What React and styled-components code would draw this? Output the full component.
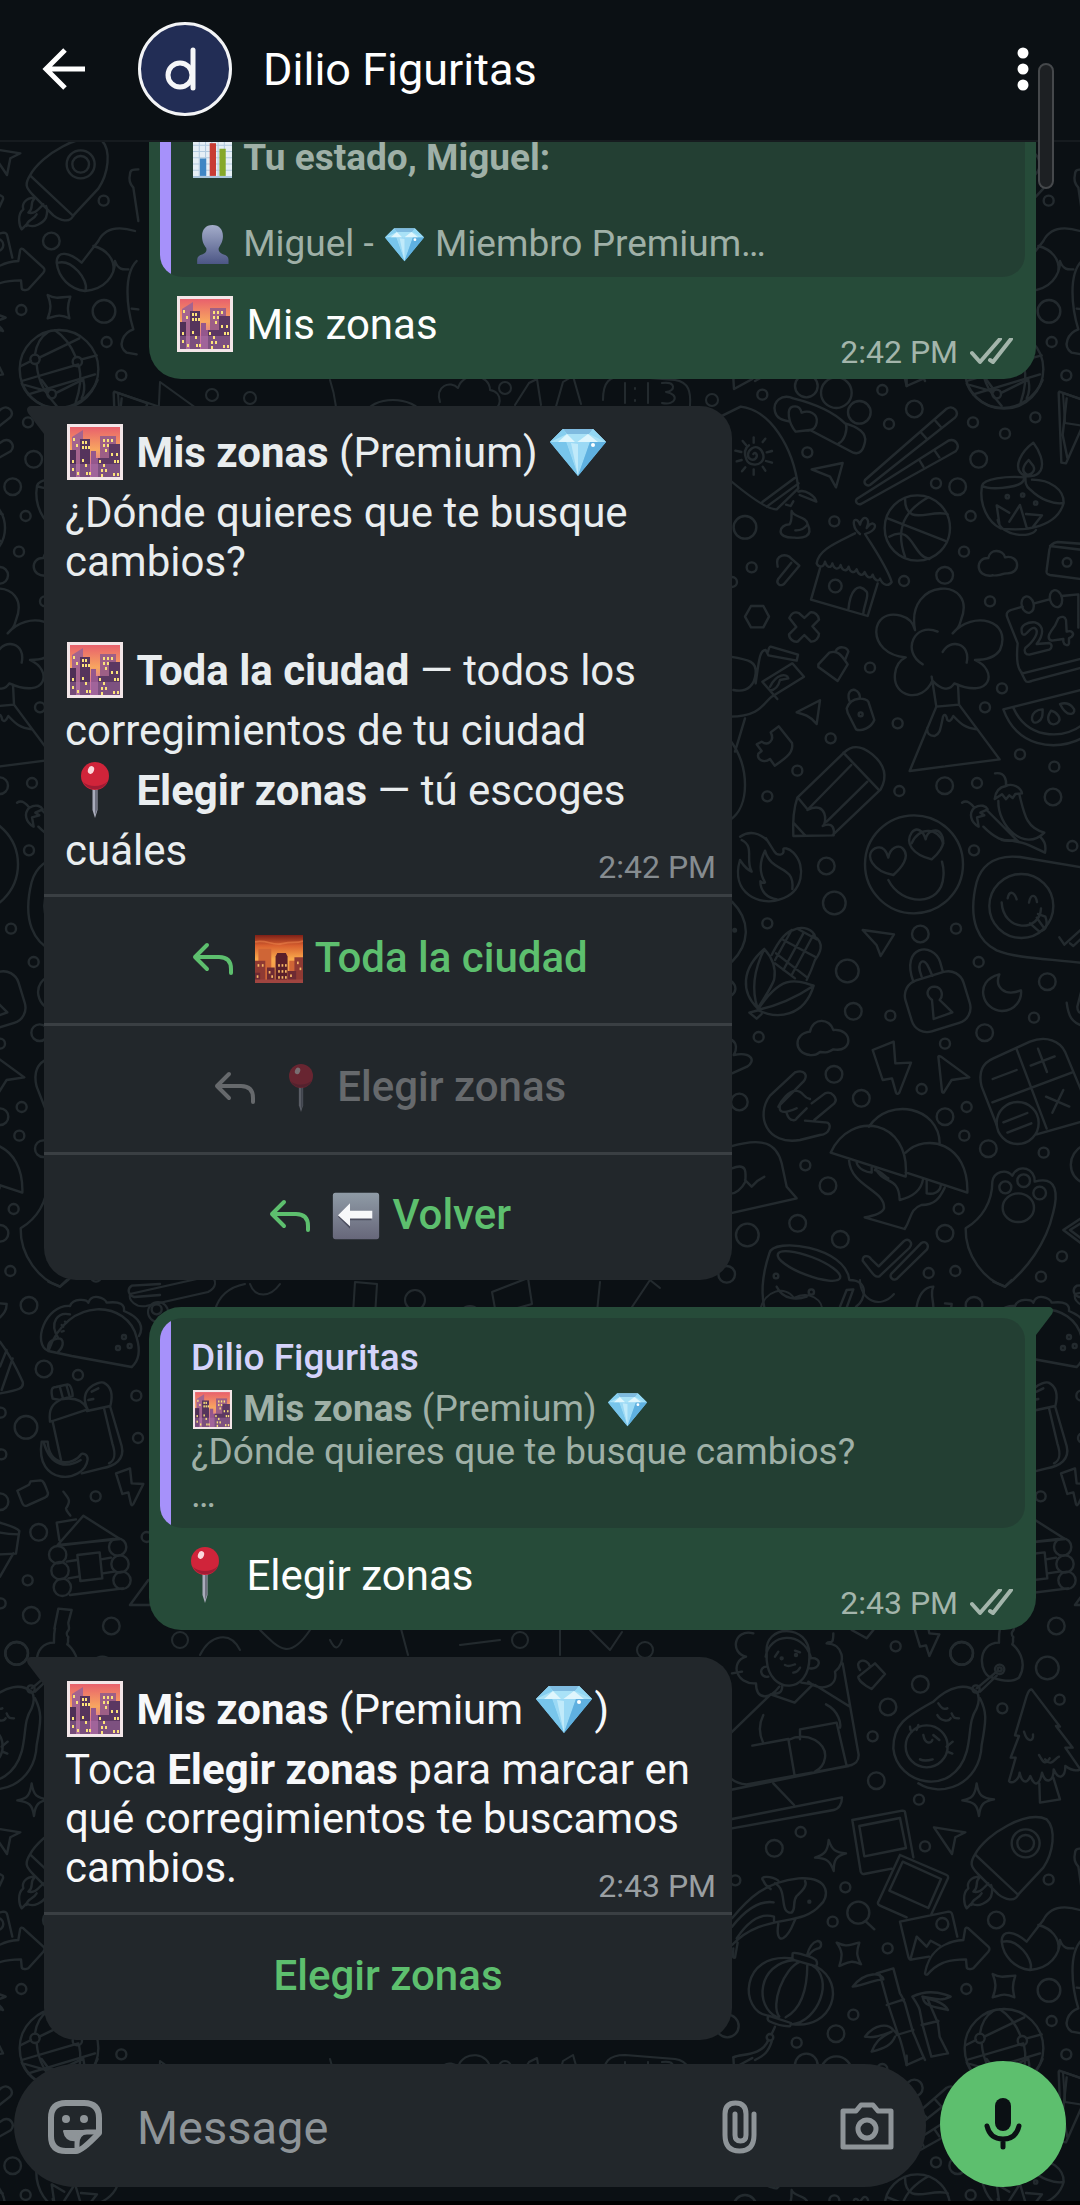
import React from "react";
import styled, { createGlobalStyle } from "styled-components";

const color = {
  page: "#0b1014",
  line: "#232a2e",
  incoming: "#22272b",
  outgoing: "#264b39",
  quote: "#233f33",
  accent: "#a691fa",
  green: "#5dbf6e",
  divider: "#3a3f43",
  icon: "#8e9498",
};

const GlobalStyle = createGlobalStyle`
  * { box-sizing: border-box; }
  body { margin: 0; background: ${color.page}; }
  button, input { font: inherit; color: inherit; border: 0; padding: 0; background: none; }
  button { cursor: pointer; }
  svg { display: block; flex: none; }
`;

const Page = styled.div`
  position: relative;
  display: flex;
  flex-direction: column;
  height: 100vh;
  overflow: hidden;
  background: ${color.page};
  font-family: Roboto, "Liberation Sans", sans-serif;
  font-size: 42px;
  line-height: 49px;
`;

/* ---------- wallpaper ---------- */

const WallpaperSvg = styled.svg`
  position: absolute;
  inset: 0;
  width: 100%;
  height: 100%;
`;

const dots = (list, r) => list.map(([x, y]) => <circle key={`${x}-${y}`} cx={x} cy={y} r={r} />);

const Section = ({ x, y, children }) => (
  <g transform={`translate(${x} ${y}) scale(0.33333)`}>{children}</g>
);

const DoodlesTop = () => (
  <Section x={720} y={380}>
    {dots([[127,44],[487,30],[507,132],[262,217],[759,127],[946,112],[855,161],[648,310],[752,408],[343,424],[732,515],[95,562],[552,603],[810,664],[450,863],[846,925],[795,982],[533,1030],[332,1075],[900,1123],[232,1172],[1003,1160],[142,1249],[538,1233],[771,1209],[36,606]], 15)}
    {dots([[583,87],[776,238],[713,320],[674,586],[674,1217],[999,1251]], 25)}
    {dots([[75,442],[259,18],[418,97]], 34)}
    <circle cx="349" cy="38" r="46" />
    {/* hot-air balloon */}
    <path d="M-40 130 62 80C150 90 220 200 235 325L170 388C140 390 60 330 -40 240M127 366l97-72M140 380l96-70M235 335c20-8 50 12 54 30l-50-20M198 374l14 4 8-14" />
    <path d="M100 222c5-8 15 2 8 12s-25 5-24-10 18-28 32-20 20 30 8 42-38 10-45-8-4-34 8-42M101 172v16M101 268v16M46 212l18 4M138 243l18 5M68 183l10 12M128 186l8-10M50 244l15-4M140 217l16-4M66 274l10-12M128 260l8 12" />
    {/* hand cream */}
    <path d="M165 95c-8-30 20-55 55-40 60 15 120 40 155 75 40 10 65 30 60 55s-15 40-35 33L270 150l-43 5C205 130 198 85 218 80s25 10 27 18c20-8 50 0 45 30-3 20-15 20-25 24M378 132c5 20-5 50-22 58M165 95c5 20 20 25 45 30" />
    {/* chopsticks */}
    <path d="M435 300 680 86c20-12 40 10 25 27L450 315c-10 5-20-5-15-15ZM410 357 685 182c20-8 38 14 22 32L423 372c-12 3-18-7-13-15ZM604 158l16 18M646 122l16 18M598 240l12 20M644 212l14 20" />
    <path d="m275 268 93-19-20 73-18-32ZM215 393c5 20 45 15 48 40-15 20-30 18-37 18M263 433c20 40-20 42-40 40-60 2-45-40-15-40 10-10 5-30 7-40" />
    {/* beach hut */}
    <path d="M405 460c-60 30-110 50-115 90 5 12 20 15 25-5 5 18 18 22 22 5 5 20 20 20 25 5 5 20 20 20 24 5 5 20 18 20 24 8 5 18 18 22 24 8 8 20 20 20 24 8 5 18 18 22 22 12 8 20 25 25 35 10C500 560 465 510 435 462c35-10 35-30 22-32-10 2-12 8-17 14 15-30-12-45-20-10-8-20-22-18-18 0 2 14 10 22 18 28M300 565l-27 94 170 49 30-98M385 690c5-60 30-85 55-55 8 12-8 40-10 65" /><circle cx="346" cy="618" r="19" />
    {/* basketball */}
    <circle cx="592" cy="444" r="98" />
    <path d="M503 415 677 483M625 352C540 400 530 460 555 530M555 355c0 90 80 30 128 48M508 470c70-40 70 60 120 67" />
    {/* oil lamp */}
    <path d="M940 188c-40 30-55 70-40 88 15 20 50 15 62-5 12-25-5-60-22-83ZM926 240c-20 20-20 35-8 42s30-8 22-24ZM916 292c-60-5-125 5-130 25 25 15 100 5 118-8 12-8 8-18 12-30 0 30 0 40 15 50 30 30 70 45 100 40 2-40-40-70-95-70M786 317c-10 60 20 110 55 128 80 10 170-5 190-76M833 420c10 50 100 55 115 30M838 430l-8-54 38 22M868 425l32-50 20 68M918 402l48 4-28 36" />
    <circle cx="862" cy="350" r="5" /><circle cx="908" cy="345" r="5" /><circle cx="947" cy="369" r="5" />
    <path d="M740 10c40 100 180 100 228-10M750 15l70 20M845 38l80-40M800 0l22 30M925 0c5 20 5 35-5 55" /><circle cx="830" cy="42" r="13" />
    <path d="m1018 35 100 35-80 180-14-2-8-210M1040 55l-12 110 14 68M560-10v28l50-22M40-5l2 32 55-30" />
    <path d="M815 587c-50 5-50-55-10-53 5-30 45-25 50-2 45-10 50 50 5 48-15 0-10 5-30 6s-8-3-15 1Z" />
    <path d="M1090 598 990 585c-10-2-12-5-10-15l8-60c2-15 10-22 25-24l80 6M990 498l100 12" /><circle cx="1041" cy="547" r="13" />
    <path d="M173 560c-10-40 30-40 40-25l25 22-46 55c-10 8-25 0-18-14l40-50M75 710l18-32h37l17 32-17 32H93ZM208 714c5-12 15-20 28-15l17 15 18-17c12-2 25 8 26 22l-20 20 20 22c0 12-10 25-24 24l-20-20-20 20c-12 2-26-8-26-22l22-22Z" />
    {/* volcano with its cloud */}
    <path d="M585 750c-30-160 190-160 138-30-5 20-10 25-25 40 60-70 180-40 142 50-20 30-60 30-75 30 70 30 50 120-62 70-10 15-30 30-66-8-30 70-120 50-112-20 2-20 12-40 32-50-120-10-110-150-15-125 30 8 40 30 43 43M653 755c-70-30-110 60-45 98M668 816c20-40 85-30 72 32M635 890l14 90 68-6-3-60M649 980l-80 193 270-35L717 974M669 1010c-10 50-10 50-25 58-15 0-25-8-22-25M669 1010c5-10 10-5 13 10 5 5 10 5 18-12 20 20 30 35 70 40" />
    {/* calendar */}
    <path d="M908 680l-35 10c-15 5-15 15-10 25l30 75M943 670l45-12M1025 648l50-5v100M893 790c-5 50 0 80 15 90l180-45M900 870l15 30c5 10 10 5 20 3l150-40" />
    <ellipse cx="923" cy="674" rx="18" ry="25" transform="rotate(-15 923 674)" /><ellipse cx="1008" cy="656" rx="18" ry="26" transform="rotate(-15 1008 656)" />
    <path d="M905 755c-5-20 20-30 40-28 30 10 25 40 5 65l38-3c10 5 8 15 0 20l-60 15c-12 0-18-10-12-20 25-20 45-50 28-60-12-3-20 15-30 20-8 0-8-3-9-9ZM1015 715c10-8 20-5 23 5l2 35c15-5 25 5 15 15l-8 5v15c-2 10-15 5-17-5v-8l-35 5c-15-5-8-20-2-28 12-15 18-28 22-39Z" />
    {/* watermelon */}
    <path d="m1090 928-240 60c40 110 150 130 240 85M880 983c40 90 140 100 210 50" />
    <path d="M968 988c-40 0-40 50-15 38 15-8 15-20 15-38ZM993 992c-20 30 0 48 18 38 20-15-5-35-18-38ZM1020 972c25 50 55 25 38 10-10-12-25-14-38-10Z" />
    {/* paint tube and padlocks */}
    <path d="M30 830c60 10 80 15 77 50-3 30-20 60-67 50M107 910c10-70 12-100 30-100l8 16 85 16 4-18-82-24c-5 0-5 5-8 15M30 1010c90 0 100-40 125-60l97-60-35-40-90 55 45 52M150 920c20-40 50-40 55-25l-25 5c-5 20-15 30-30 32M75 1015l-30 100M30 1080c60 80 60 200 0 240" />
    <path d="m295 853 33-35c25-8 35 5 55 35l-30 50-58-42ZM346 815c10-20 35-15 39 0l-10 25M380 985c15-40 60-30 65-20l18 55c-10 25-40 35-55 28l-25-50ZM388 962c-8-25 5-35 17-32 12 5 15 15 15 25M230 997l70-36-10 71c-20-25-40-30-60-35Z" /><circle cx="422" cy="1003" r="6" />
    <path d="m110 1093 15-8c20 15 40-5 27-28l24-18 40 50c5 25-10 40-52 68l-14-20c-20 15-40 0-35-16l10-8Z" />
    {/* pencil */}
    <path d="m232 1253 140-135c30-30 60-15 85 5 30 25 50 60 25 105l-145 138-117 2c-2-40 0-80 12-115ZM370 1118l105 110M394 1155 262 1290c60-30 60 40 46 48 35-15 35 15 33 28M442 1205 320 1325M220 1328l35 38M235 1255l25 30" />
    {/* chillies */}
    <path d="M825 1180c30-5 35 20 33 38M858 1218c20-10 45 5 48 22l-20 2-8 12-10-8-10 12-12-15-22 14c2-20 10-35 34-39ZM898 1243c15 60 20 100 75 115-60 60-140-20-138-95M726 1268c15-10 30 5 37 15M763 1283c20-12 35-5 40 5l-22 10 12 8-22 6 5 28c-25-15-30-40-13-57ZM790 1340c30 30 60 50 100 40M800 1290l95 95" />
    {/* top of the tongue-out sticker and of the fire */}
    <path d="M575 1390c20-50 80-50 95 0M60 1370c30-20 60-10 80 10" />
  </Section>
);

const DoodlesMiddle = () => (
  <Section x={720} y={840}>
    {dots([[762,31],[1057,18],[142,250],[708,266],[776,366],[511,527],[942,533],[116,591],[675,611],[605,747],[740,801],[733,887],[971,938],[256,976],[716,1107],[1026,1249],[626,1299],[706,1293],[963,1310]], 15)}
    {dots([[319,78],[601,282],[400,514],[982,425],[342,703],[794,578],[424,775],[675,830],[805,926],[58,786],[324,1037],[233,1150],[361,1198],[675,1180],[20,1303]], 25)}
    {dots([[343,189],[382,393],[82,1185]], 34)}
    {/* fire */}
    <path d="M65 0c40 20 10 60 30 95-20-10-25-20-35-35-30 100 60 140 120 118 70-20 80-100 40-140-15-15-30-15-30-10 5 20-20 20-28 5L138-5M135 32c-20 40-15 70 0 95-5 5-8 0-14-3 0 30 20 50 50 54M135 32c20 70 90 40 82 115" />
    {/* face with hearts */}
    <circle cx="582" cy="73" r="147" />
    <path d="M505 120c40 80 160 80 165-10 2-15 0-30-4-45M520 105c-60-10-90-60-55-80 25-10 35 10 40 28 5-30 30-40 43-28 25 25-5 60-28 80ZM635 58c-60-15-80-50-60-80 15-20 35-5 42 20 5-28 35-35 47-15 15 25 0 50-29 75Z" />
    {/* tongue-out sticker */}
    <path d="m1090 83-190-32c-90-10-120 40-130 75-30 120 10 180 60 205 60 25 160 25 260 38" /><circle cx="904" cy="198" r="96" />
    <path d="M845 187c5 90 115 90 118 18M863 175c5-25 20-20 27 3M927 188c5-28 20-25 24-2M930 250l28 25c25-5 25-25 18-45l-22-8M950 233l20 28M1018 292l15 22 50-45M1050 310l10 8 30-28" />
    <path d="m428 270 94 13-40 65-12-32ZM845 0c60 0 90 20 130 38C980 10 970 0 960-10M36 185c60 60 50 130 0 180M36 425c15 15 12 30 0 40" /><circle cx="44" cy="271" r="4" />
    {/* corn */}
    <path d="M133 327c-70 60-70 130-20 178 20-30 50-80 50-90 5-30-5-60-30-88ZM133 327c-30 60-40 120-20 178M113 510c60 30 140 20 168-73-60-20-100-30-168 73ZM281 437c-60 40-110 60-168 73M118 510l-30 8 22 18 15-14M155 345c20-40 40-70 65-75 30-15 60 0 65 20 30 20 15 50 0 70-10 30-20 50-25 60M190 300l95 50M168 340l90 70M165 370l60 45M235 268l55 30M190 390l60-110M215 405l65-120M165 360l50-90" />
    {/* padlock */}
    <path d="M580 425c-40-110 60-120 80-60l8 28M605 410c-20-50 10-60 22-25l10 22" /><rect x="562" y="405" width="182" height="160" rx="48" transform="rotate(-17 653 485)" />
    <path d="M636 480c-25-20-10-40 8-40 25 2 25 30 15 40l38 37-56 20Z" />
    <path d="M838 403c-80 20-50 110 8 110 40 0 60-35 57-62-50 20-80-10-65-48ZM458 630l63-25 5 65 47-2-35 90c-5 5-8 5-10 0l-12-43-28 5ZM655 650c0-3 5-2 8 0l85 62-53 8-24 38c-3 0-5-2-5-5Z" />
    <path d="M270 645c-50-5-50-65 0-70 10-45 60-40 70-5 60-5 60 70 0 58-15 10-20 10-40 8-10 8-15 10-30 9Z" />
    {/* calculator */}
    <path d="M830 855l-45-115c-10-40 0-70 35-85l110-50c50-20 90 0 105 30l50 120v90l-135 38M890 628l90 238M817 787l240-90M818 717l72-27M932 677l72-28M954 626l27 70M978 770l70 30M1030 750l-33 68M850 847l72-28M862 878l72-28" /><circle cx="893" cy="849" r="63" />
    <path d="M1040 488c5 40 15 60 50 70M1090 430l-18 70c0 15 5 20 18 20" />
    {/* rock hand */}
    <path d="M225 697c30-10 40 10 25 28l-70 70c-10 40 50 10 50 10M225 697l-75 70c-45 60-10 150 90 133l60-15c30 0 40-40 15-38l-60-5M275 790l40-30c20-8 40 15 28 30l-60 50M175 800c10-20 30-45 50-48 30 2 20 20 45 25M200 820c10 30 30 20 30 15l30-30M36 600c15 10 15 30 5 45 50-10 70 15 40 35l-45 20" />
    {/* cap */}
    <path d="M30 920c100-30 140-10 155 50l15 70 30 35-200 45M36 985c50-20 40 20 40 40-10 20-30 40-50 35M75 1020l20 20 18-18 20-12" />
    {/* mushrooms */}
    <path d="M332 938c60-130 240-100 225 72ZM447 860c60-90 210-60 212 50M557 938c60-60 190-30 185 120L557 997M387 960c5 80 110 90 105 145-5 15-30 22-58 27l120 35c20-30 15-60 50-72 40 0 55-20 70-52M467 985c20 50 70 20 72 95 40-10 65-30 70-62M410 968c5 20 30 28 45 30v-16M620 1020v40c20 5 40-5 42-22M465 990c20 5 30 20 40 25" />
    {/* paw sleeve */}
    <path d="M737 1165c50-30 80-80 80-140 5-30 40-40 60-18 20-40 70-20 67 18 70-20 70 40 55 95-20 90-80 170-144 220-60-20-120-90-118-175Z" /><circle cx="856" cy="1042" r="18" /><circle cx="911" cy="1022" r="19" /><circle cx="959" cy="1059" r="19" /><ellipse cx="895" cy="1103" rx="47" ry="43" />
    <path d="M1090 915c-50 30-50 90 0 115M1090 1215l-60-45 60-40M1090 1200l-40-30 40-25M428 1262c0-20 20-15 25-5l23 22 75-75c15-12 30 5 17 20l-90 85c-15 5-20-10-50-47ZM515 1300l88-90c15-10 25 5 18 18l-90 88c-12 8-25-5-16-16Z" />
    {/* cup */}
    <path d="M148 1240c10-50 230-20 240 80 60 0 50 60 20 80M148 1240c-20 60-30 120-10 180M170 1340c20 40 60 40 90 30M360 1400l20-50 20-2-22 60M590 1400c5-30 20-60 50-60-10 20 0 40 0 60" /><ellipse cx="267" cy="1278" rx="100" ry="28" transform="rotate(21 267 1278)" /><circle cx="168" cy="1308" r="7" /><circle cx="274" cy="1356" r="8" />
  </Section>
);

const DoodlesLower = () => (
  <Section x={720} y={1620}>
    {dots([[527,79],[458,349],[847,265],[1019,239],[597,539],[242,636],[615,679],[376,802],[338,905],[503,985],[739,1107],[400,1184],[230,1268],[995,1203],[986,779],[1039,1303],[46,781]], 15)}
    {dots([[601,193],[504,261],[469,482],[163,685],[829,900],[348,1241]], 25)}
    {dots([[725,100],[982,144],[987,1111],[22,1218]], 34)}
    {/* woman with a box */}
    <path d="M100 40c-60-15-70 60-22 70-50 15-30 85 30 80 0 50 40 50 70 10M340 40c0 40-10 20-20 30 50 0 60 60 25 85 10 50-50 60-80 30M140 100c-10-90 130-90 128 5 5 120-120 120-128 15ZM137 110c10-70 110-80 135 0M270 115c40-5 30 35 0 30M140 140c-25 0-20 35 5 30M195 135c10 5 15 3 30-2M220 158c10-2 15-5 20-15M165 110l10-15M225 92l15 5M187 195c0 25-10 25-35 28l72 25 55-55-35-5M152 223-10 380M285 195l105 65M130 285c-15 30-12 60 0 85M318 253c40 20 45 60 42 70M97 377l108-20 18 105M240 358v-30l110-20 30 130M205 360c30-15 60-10 80 0 50 30 30 80 0 95M368 130l48 275c0 20-10 28-30 33L80 493C30 490 20 460 0 430M30 510l365-75M160 490l62 65M36 597l330-65c0 20-10 35-25 38L36 625M36 160l30-5" />
    <circle cx="185" cy="115" r="3" /><circle cx="228" cy="105" r="3" />
    <path d="m395 30 45 25 20-25M585 30l15 50 18-4 10 32 30-65-30-3-2-10M415 170l50-40 30 32-40 45c-30-15-40-30-40-37ZM420 150c-20-30 20-40 30-10" />
    {/* knitted mitten with key ring */}
    <path d="M840 25c-4 20-3 35-3 43-70 0-60 100-20 105 30 10 60 15 80 0 30-50-10-95-20-100 5-10 0-10 3-22-5-5-8-10 0-20 5-5 0-15 0-22M838 26l12-60 40 4-10 38M770 205l60-50M780 215l50-48" /><circle cx="839" cy="148" r="14" /><circle cx="839" cy="148" r="6" /><circle cx="768" cy="207" r="11" />
    {/* avocado */}
    <path d="M770 215c-30-25-80-20-130 30C560 290 520 310 520 385c10 110 180 150 220 10 15-60 5-90 30-130 8-20 10-35 0-50ZM780 235c20 40 20 60 5 140-5 120-120 160-190 115" /><circle cx="620" cy="379" r="63" />
    <path d="M655 250c10 15 15 20 27 15M652 285c10 20 35 20 40 10M695 280c5 15 10 15 22 15M610 345c5 30 25 25 27 15M640 345l18 15M600 418c10 5 20 5 38 0M575 335c-5-5-5-15-5-15M590 330l5-15M680 380l18-15M682 395l15 6" />
    {/* pine tree */}
    <path d="M935 208c-10 0-10 10-15 20l-35 118 12 2-25 65h15l-20 70c5 10 30 0 32-25 5 25 20 40 32 10 15 40 30 20 35-10 10 35 35 30 35-10 15 35 35 25 35-10 20 15 35 15 45 10l-45-65h22l-50-65 12 2ZM958 490l2 58 60-10-20-65M912 335c10 35 30 30 27 8M957 405c10 15 15 35 32 10M975 418c20 25 30-5 42-8" />
    <path d="M770 490c5 35 15 45 52 48-30 5-42 15-45 50-5-35-15-42-50-47 30-5 38-15 43-51ZM326 660c10 30 20 38 52 40-30 8-37 20-37 53-10-30-20-38-56-40 30-10 38-20 41-53ZM642 622l94 15-30 15-10 50ZM350 968c30 15 40 5 68 0-10 30-8 40 5 65-30-15-40-5-65 5 10-30 10-45-8-70ZM818 1062c30 15 40 5 68 5-10 30-8 40-3 65-30-15-45-5-65 0 12-30 10-45 0-70Z" />
    {/* snapshots */}
    <path d="m397 600 150-28c5 0 8 0 8 5l25 135M397 600l25 155c2 5 5 8 10 7l83-16M418 618l122-24 18 90-125 25ZM540 705l140 60c5 2 5 5 4 10l-50 108M540 705l-65 140c-3 5 0 10 5 12l80 35M548 725l115 52-38 87-117-52ZM540 905l145-30c8 0 10 2 12 10l15 65M540 905l25 105c2 8 5 10 12 8l50-8M572 1015l18-65 30 30 12-18 28 15" /><circle cx="667" cy="912" r="18" />
    <path d="M615 1060c10-60 50-95 115-100l5-30c0-8 5-8 10-5l60 55c5 5 5 8 0 15l-45 50c-10 5-20 2-20-5l-2-22c-60 0-90 15-115 45-5 2-8 0-8-3Z" />
    {/* rocket */}
    <path d="M765 703C800 640 920 570 980 598c30 30 20 100-10 145l-75 80c-10 25-40 15-60 0l-60-60c-25-25-25-35-10-60ZM765 703l130 122M780 770c-30 0-40 20-35 35-20 15-12 50-5 60l15-15c20 15 50-5 58-20 5-15 5-25 0-35M780 770c-20 20 0 30-20 45 20 5 30-10 45-25M755 855c0-20 20-15 30-35" /><circle cx="917" cy="670" r="42" /><circle cx="917" cy="670" r="25" />
    {/* koi and magnifier */}
    <path d="M36 895c50-60 100-110 200-120 100-5 90 60 65 80-60 70-170 20-265 120M175 782c-20-15-60-15-45 0 5 15 15 20 22 25M165 790c40 20 10 90 50 88 15-15 0-30 15-50 10-10 35-30 25-45M175 912c-5 30 0 50 15 42 25-15 30-50 38-60M36 920c40-50 80-80 125-73M50 955c40-60 80-75 112-65v16M40 985c0 20-5 30 5 28l8-45" /><circle cx="268" cy="845" r="3" /><circle cx="415" cy="878" r="33" /><path d="m438 905 25 23" />
    {/* lantern */}
    <path d="M218 1015c-160-20-160 160-75 172M290 1040c90 50 50 190-75 172M218 1000c5-5 60 10 70 20 8 15-2 20-5 18l-63-18c-5-5-2-15-2-20ZM222 1020c-110 10-120 140-50 172M240 1025c-50 20-90 130-62 165M262 1032c0 60-10 130-65 160M275 1035c70 40 20 170-60 178M145 1187l68 22c-2 5 0 10-5 10-20 0-40-5-60-15-8-5-5-12-3-17ZM262 1003c5-20 15-35 30-40 15 0 15 20 0 23-15 5-20 10-25 20M165 1220l-10 22M145 1260c-20 50-80 40-105 52M155 1265c-10 30-20 40-50 55" /><circle cx="150" cy="1252" r="10" />
    {/* bamboo */}
    <path d="m470 1060 50-15 20 75c10 15 10 20 15 30l25 90c10 20 20 50 35 80M480 1065l25 90 30 90c10 20 15 50 25 90M500 1155l52-17M530 1245l50-15M398 1100c40-50 90-40 92-22-25 0-50 15-92 22ZM577 1130c40-20 80-15 115 0-30 15-50 5-85 0 20 10 60 10 77 40-40-10-70-10-75-35M577 1130c10 15 20 30 22 40l10 50 25 90 50-10-25-50-5-40-30-70M605 1215l50-12M435 1250c30-40 70-40 85-20l10 10M435 1250c30 5 50-5 80-15-40 20-50 35-60 60 40-10 60-20 70-45" />
    {/* boot */}
    <path d="M845 965c0-40 40-30 75 0l50-65c20-40 60-45 110-30M845 965c5 45 40 80 85 85 60-5 90-45 90-90 10 30 30 25 40 25M850 965c40-10 90 50 82 82M955 915c40 10 65 40 60 75M1085 960c-40 40-30 140-10 205-30 10-50 50-20 70l30 5M1065 700c-5 20 0 30 10 40l15 100M1065 700c0-15 10-15 25-15M1090 1105l-20-2" />
    {/* globe */}
    <circle cx="852" cy="1285" r="118" />
    <path d="M780 1240c5-35 20-55 40-68M840 1168c30 20 50 50 62 80M793 1250l120-58M738 1275l30-15M920 1255l45-12M785 1270c5 60 30 90 60 125M912 1275c10 40 0 80-10 110M740 1320l170-50M760 1360l200-60" /><circle cx="780" cy="1255" r="14" /><circle cx="907" cy="1262" r="14" />
  </Section>
);

const DoodlesSide = () => (
  <Section x={945} y={1280}>
    {dots([[234,285],[409,347],[414,474],[287,649],[83,901],[440,771],[2,398],[4,523],[2,970],[470,88]], 15)}
    {dots([[87,76],[132,267],[116,757],[94,1006],[334,1038],[0,665]], 25)}
    {dots([[78,442],[50,1120]], 34)}
    {/* taco */}
    <path d="M145 213c60-170 240-150 265-40 15 50 0 75-15 88l-180-33ZM145 213c-50-20-10-140 65-135 10-25 50-20 55-10 10-30 50-15 55 0 40-5 55 5 52 25 50 20 60 50 45 75M145 213c-5-25 10-35 30-38 15 0 20 20 0 40M175 175c-30-50 0-80 35-72M185 135l5 5M195 125l4 4M185 155l6-2" />
    <circle cx="372" cy="171" r="6" /><circle cx="354" cy="204" r="6" /><circle cx="389" cy="198" r="6" />
    {/* picnic jar */}
    <path d="M150 425c-5-40 10-55 30-65l-22-4c-8-30 0-35 10-35l35-8c12 0 15 30 15 35l-35 10c50-10 70 10 80 30l-105 35ZM263 388c-30-60 30-85 48-80 30 15 25 50 20 70l-70 15M312 385l25 105c10 30 10 50-10 60M330 378l35 120c10 40-20 60-60 67l-60 15M158 425l25 115M180 322l8 30M200 318l8 28M275 335l20-10M265 360l15-3" />
    <path d="M125 485h18c5 80 80 70 100 38 5-5 20 0 20 15-10 75-160 80-138-53ZM132 490c20 70 70 75 110 50" />
    <path d="m52 632 35-18 5-10 30-3c10 0 15 20 22 38 0 8-2 10-8 13l-55 25c-8 2-12 0-16-12ZM348 580l42-15 5 45 35 2-30 60c-3 5-5 5-7 0l-8-35-18 5ZM190 635c15 20 25 25 8 50 0 10 10 15 13 22" />
    {/* log cabin */}
    <path d="m173 795 77-88 110 70-185 18M178 780l-8-52 58-10M232 825l67-8 8 78-66 8ZM200 845l30-5M303 838l30-5M205 895l30-5M308 880l35-5M210 945l160-20M190 795l150-18" />
    {dots([[173,824],[180,872],[187,922],[353,801],[360,852],[366,901]], 26)}
    {/* cone, tree and party hat */}
    <path d="M0 185c30 40 50 80 68 120 5 20-10 25-68 35M20 210 0 260M38 235 5 330M0 728c30 10 50 15 58 25l-10 68-48 2M0 758c25 5 40 5 55 5M40 820 0 890M445 900l-55 75h90M145 5l35 15 20-20M480 12l-85 5c-15 10-10 30 8 34l77-6M0 70l20 2c0 20-10 30-20 40" />
  </Section>
);

/* Doodles in the narrow bands between one message and the next. */
const DoodlesBand = () => (
  <g>
    <path d="M118 393l42 14-14 20-26-4ZM160 382l36 26-38 16ZM330 380c5 15 8 30 6 50M365 415c5-20 50-20 58 0M440 402c-5-16 10-22 18-14 6-18 32-14 32 2 14 2 12 20 0 22M515 405l14-22 8-4 4 26M555 410l8-28 10-6 8 28M603 400c0-18 6-24 22-24l50 4c14 2 16 12 15 26l-6 24M625 383v20M635 388v1M635 400v1M648 383v20M662 383c14-2 14 8 4 9 14 2 10 14-4 11" />
    {dots([[212, 395], [505, 388], [712, 400], [250, 398]], 6)}
    <path d="M130 1294l80-18c8 4 6 12-2 16l-62 14c-10 2-18-6-16-12ZM215 1310c5-18 20-24 30-26M250 1284c5 14 20 14 30 0M355 1282l22 2-2 32-22-2ZM492 1292l36-14 4 26-36 10ZM600 1282l-4 40M630 1310l20-30 10 8M760 1310c5-20 25-25 34-12 15-8 30 2 28 14M860 1280c0 20 20 30 34 14" />
    {dots([[415, 1300], [158, 1312], [470, 1316]], 10)}
    <path d="M200 1655c10-20 30-25 40-5M260 1630c20 20 30 30 50 0M400 1625l8 30M460 1645l40-5M590 1630l20 20 12-18M560 1625v30M330 1640c5 10 8 10 12 0" />
    {dots([[180, 1640], [645, 1650], [520, 1640]], 8)}
  </g>
);

const Wallpaper = () => (
  <WallpaperSvg aria-hidden="true">
    <defs>
      <g id="doodles" fill="none" stroke={color.line} strokeWidth="2" strokeLinecap="round" strokeLinejoin="round">
        <g strokeWidth="7"><DoodlesTop /><DoodlesMiddle /><DoodlesLower /><DoodlesSide /></g>
        <DoodlesBand />
      </g>
      <pattern id="paper" width="945" height="1679" patternUnits="userSpaceOnUse">
        <use href="#doodles" />
        <use href="#doodles" x="-945" />
        <use href="#doodles" y="-1679" />
        <use href="#doodles" x="-945" y="-1679" />
      </pattern>
    </defs>
    <rect width="100%" height="100%" fill="url(#paper)" />
  </WallpaperSvg>
);

/* ---------- emoji ---------- */

const EmojiSvg = styled.svg`
  display: inline-block;
  width: ${(p) => p.$size}px;
  height: ${(p) => p.$size}px;
  margin: ${(p) => p.$margin};
  vertical-align: ${(p) => p.$drop}px;
`;

const emojiSizes = {
  body: { $size: 56, $margin: "7px 3px 8px 2px", $drop: -21 },
  quote: { $size: 39, $margin: "0 2px", $drop: -8 },
  action: { $size: 48, $margin: "0 2px 0 1px", $drop: -11 },
};

const windowsAt = (list) => list.map(([x, y]) => <rect key={`${x}-${y}`} x={x} y={y} width="2" height="3" />);

const art = {
  city: (
    <>
      <defs>
        <linearGradient id="dusk" x1="0" y1="0" x2="0" y2="1">
          <stop offset="0" stopColor="#e8606c" /><stop offset=".45" stopColor="#f8a660" /><stop offset=".75" stopColor="#d9739a" /><stop offset="1" stopColor="#c7609a" />
        </linearGradient>
      </defs>
      <rect width="56" height="56" fill="#f3e6e8" />
      <rect x="3" y="3" width="50" height="50" fill="url(#dusk)" />
      <path d="M5 13 16 6v47H5Z" fill="#a4648f" />
      <path d="M33 12h16v41H33Z" fill="#9d5f86" />
      <path d="M3 26h6v27H3Z" fill="#4e2f56" />
      <path d="M24 27h5v26h-5ZM29 34h8v19h-8Z" fill="#94578d" />
      <path d="M13 15h10v38H13Z" fill="#55345c" />
      <path d="M42 20h11v33H42ZM31 34h11v19H31Z" fill="#5b3862" />
      <path d="M3 40h50v13H3Z" fill="#b277ae" opacity=".4" />
      <g fill="#fbe27a">{windowsAt([[6,14],[9,20],[15,17],[18,17],[15,22],[18,22],[21,22],[36,15],[40,15],[44,15],[36,20],[40,20],[38,25],[44,29],[49,29],[15,35],[18,40],[32,36],[36,40],[47,36],[50,36],[5,36],[5,44],[10,48],[19,48],[22,48],[34,45],[38,45],[34,50],[46,49],[50,49]])}</g>
    </>
  ),
  sunset: (
    <>
      <defs>
        <linearGradient id="sunset" x1="0" y1="0" x2="0" y2="1">
          <stop offset="0" stopColor="#7d1f17" /><stop offset=".22" stopColor="#d9602f" /><stop offset=".5" stopColor="#f9a94b" /><stop offset="1" stopColor="#f08a4b" />
        </linearGradient>
      </defs>
      <rect width="56" height="56" fill="url(#sunset)" />
      <path d="M0 8c14-3 20 5 32 2s16 0 24-3" stroke="#e98049" strokeWidth="2" fill="none" opacity=".6" />
      <path d="M4 16h15v40H4ZM40 30h12v26H40Z" fill="#cf6536" />
      <path d="M0 30h12v26H0ZM46 26h10v30H46Z" fill="#8f3a33" />
      <path d="M24 25l2-4h10l2 4v31H24Z" fill="#5a1f2a" />
      <path d="M14 38h9v18h-9ZM38 42h10v14H38ZM0 44h6v12H0Z" fill="#6d2a33" />
      <path d="M0 52h56v4H0Z" fill="#a04540" />
      <g fill="#f6b765">{windowsAt([[27,34],[31,34],[35,34],[27,41],[31,41],[35,41],[27,48],[31,48],[35,48],[3,34],[8,34],[2,47],[16,42],[19,47],[41,46],[49,31],[52,38]])}</g>
    </>
  ),
  gem: (
    <>
      <path d="M13 5h30l13 13-28 34L0 18Z" fill="#72c3ea" />
      <path d="M13 5h30l13 13H0Z" fill="#a9e2f7" />
      <path d="M13 5h30l-4 5H17Z" fill="#7fbbe0" />
      <path d="M0 18 17 10l-4-5Z" fill="#86ceef" /><path d="M56 18 39 10l4-5Z" fill="#93d8f4" />
      <path d="m8 18 9-8 9 9 12-9 10 8Z" fill="#dff6fd" />
      <path d="M16 18h24L28 52Z" fill="#9bd9f5" />
      <path d="M0 18h16l12 34Z" fill="#78c5eb" /><path d="M56 18H40L28 52Z" fill="#5fb0e0" />
      <path d="M28 20v32l-7-33Z" fill="#c0eafa" /><circle cx="43" cy="21" r="2" fill="#fff" />
    </>
  ),
  pin: (
    <>
      <path d="M25.500 26h5v22l-2.500 8-2.500-8Z" fill="#a9acbb" /><path d="M28 28h2v20l-2 5Z" fill="#6f7180" />
      <circle cx="28" cy="14" r="14" fill="#d0243a" />
      <path d="M16 20a14 14 0 0 0 25-1c-6 6-18 7-25 1Z" fill="#a01c34" />
      <ellipse cx="24" cy="8" rx="3" ry="4" fill="#fbd9dd" transform="rotate(20 24 8)" />
    </>
  ),
  chart: (
    <>
      <rect x="0" y="0" width="56" height="56" fill="#e6eff6" />
      <path d="M0 9h56M0 18h56M0 27h56M0 36h56M0 45h56M9 0v56M18 0v56M27 0v56M36 0v56M45 0v56" stroke="#b3cbe0" strokeWidth="1.500" />
      <path d="M10 28h9v25h-9Z" fill="#3f86c4" /><path d="M24 6h9v47h-9Z" fill="#c83c34" /><path d="M38 14h9v39h-9Z" fill="#86a829" />
      <path d="M0 53h56v3H0Z" fill="#a8c4dc" />
    </>
  ),
  person: (
    <>
      <defs>
        <linearGradient id="bust" x1="0" y1="0" x2="0" y2="1"><stop offset="0" stopColor="#a4adca" /><stop offset="1" stopColor="#4c5685" /></linearGradient>
      </defs>
      <path d="M28 0c10 0 15 7 15 16 0 8-4 13-6 17-1 4 1 7 6 9 5 1 8 4 8 8v6H6v-6c0-4 3-7 8-8 5-2 6-5 5-9-3-4-6-9-6-17C13 7 18 0 28 0Z" fill="url(#bust)" />
    </>
  ),
  back: (
    <>
      <defs>
        <linearGradient id="key" x1="0" y1="0" x2="0" y2="1"><stop offset="0" stopColor="#8f9ba6" /><stop offset="1" stopColor="#67677a" /></linearGradient>
      </defs>
      <rect x="1" y="1" width="54" height="54" rx="3" fill="url(#key)" />
      <path d="M7 29 21 15v10h25v8H21v10Z" fill="#4d4f60" />
      <path d="M7 27 21 13v9h26v9H21v9Z" fill="#f7f8fa" />
    </>
  ),
};

const Emoji = ({ name, label, size = "body" }) => (
  <EmojiSvg viewBox="0 0 56 56" role="img" aria-label={label} {...emojiSizes[size]}>{art[name]}</EmojiSvg>
);

const City = (p) => <Emoji name="city" label="ciudad al atardecer" {...p} />;
const Gem = (p) => <Emoji name="gem" label="diamante" {...p} />;
const Pin = (p) => <Emoji name="pin" label="chincheta" {...p} />;

/* ---------- header ---------- */

const Header = styled.header`
  position: relative;
  z-index: 1;
  display: flex;
  align-items: center;
  height: 142px;
  padding: 0 42px 2px 42px;
  background: ${color.page};
  border-bottom: 2px solid #161b1f;
  color: #fff;
`;

const IconButton = styled.button`
  display: flex;
  align-items: center;
  justify-content: center;
  color: ${(p) => p.$tone || "inherit"};
`;

const Avatar = styled.div`
  display: flex;
  width: 94px;
  height: 94px;
  margin: 0 31px 0 53px;
  border: 3px solid #f3f4f6;
  border-radius: 50%;
  background: #222d55;
`;

const ContactName = styled.h1`
  flex: 1;
  margin: 0;
  font-size: 45px;
  font-weight: 400;
  line-height: 53px;
`;

const ScrollThumb = styled.div`
  position: absolute;
  z-index: 2;
  top: 63px;
  right: 26px;
  width: 16px;
  height: 126px;
  border: 2px solid #45484b;
  border-radius: 8px;
  background: #1d2023;
`;

/* ---------- conversation ---------- */

const Conversation = styled.main`
  position: relative;
  display: flex;
  flex: 1;
  flex-direction: column;
  justify-content: flex-end;
  gap: 27px;
  min-height: 0;
  overflow: hidden;
  padding: 0 44px 21px;
`;

const Bubble = styled.article`
  position: relative;
  flex: none;
  align-self: ${(p) => (p.$mine ? "flex-end" : "flex-start")};
  width: 100%;
  max-width: ${(p) => (p.$mine ? 887 : 688)}px;
  padding: ${(p) => (p.$mine ? "11px 11px 0" : "0")};
  border-radius: ${(p) => (p.$mine ? "32px 0 32px 32px" : "0 32px 32px 32px")};
  background: ${(p) => (p.$mine ? color.outgoing : color.incoming)};
  color: ${(p) => (p.$mine ? "#fdfefe" : p.$bright ? "#f7f8fa" : "#e9edef")};
`;

const TailSvg = styled.svg`
  position: absolute;
  top: 0;
  ${(p) => (p.$mine ? "right: -17px; transform: scaleX(-1);" : "left: -17px;")}
`;

const Tail = ({ mine }) => (
  <TailSvg $mine={mine} width="18" height="28" aria-hidden="true">
    <path d="M18 0H4C0 0-1 4 1 7l16 21h1Z" fill={mine ? color.outgoing : color.incoming} />
  </TailSvg>
);

const Body = styled.div`
  display: grid;
  padding: ${(p) => (p.$mine ? "12px 12px 9px 15px" : p.$bright ? "17px 16px 8px 21px" : "11px 16px 9px 21px")};
  > * { grid-area: 1 / 1; }
`;

const Text = styled.p`
  margin: 0 5px ${(p) => (p.$bright ? 12 : 10)}px 0;
  white-space: pre-line;
`;

const Strong = styled.strong`
  font-weight: 700;
`;

const Stamp = styled.div`
  display: flex;
  align-items: center;
  align-self: end;
  justify-self: end;
  gap: 12px;
  color: ${(p) => (p.$mine ? "#a3b5ab" : p.$bright ? "#9a9fa2" : "#868c90")};
  font-size: 32px;
  line-height: 36px;
`;

const Ticks = () => (
  <svg width="43" height="28" viewBox="0 0 43 28" fill="none" stroke="currentColor" strokeWidth="4" strokeLinecap="round" strokeLinejoin="round" role="img" aria-label="Entregado">
    <path d="M2 15l8 9L30 1M20 22l3 2L41 1" />
  </svg>
);

const Quote = styled.blockquote`
  margin: 0;
  padding: 18px 20px 12px 31px;
  border-radius: 22px;
  background: linear-gradient(90deg, ${color.accent} 11px, ${color.quote} 11px);
  color: #9fb0a7;
  font-size: 37px;
  line-height: 43px;
`;

const QuoteAuthor = styled.cite`
  display: block;
  margin-bottom: 8px;
  color: #d5d3fb;
  font-style: normal;
  font-weight: 500;
`;

const QuoteText = styled.p`
  margin: 0;
  white-space: pre-line;
`;

const Action = styled.button`
  display: flex;
  align-items: center;
  justify-content: center;
  width: 100%;
  height: 129px;
  padding-bottom: 5px;
  border-top: 3px solid ${color.divider};
  color: ${color.green};
  font-weight: 500;
  &:last-child { height: 128px; }
  &:disabled { color: #66696c; cursor: default; }
  &:disabled ${EmojiSvg} { opacity: 0.4; }
`;

const ReplySvg = styled.svg`
  margin: 0 20px 0 4px;
  fill: none;
  stroke: currentColor;
  stroke-width: 4px;
  stroke-linecap: round;
  stroke-linejoin: round;
`;

const ReplyIcon = () => (
  <ReplySvg width="42" height="34" viewBox="0 0 42 34" aria-hidden="true">
    <path d="M15 4 3 16l12 12M3 16h24q12 0 12 12v4" />
  </ReplySvg>
);

/* ---------- composer ---------- */

const Composer = styled.form`
  position: relative;
  display: flex;
  align-items: flex-end;
  gap: 14px;
  padding: 0 14px 14px;
  border-bottom: 4px solid #000;
`;

const Pill = styled.div`
  display: flex;
  flex: 1;
  align-items: center;
  min-width: 0;
  height: 123px;
  padding: 2px 32px 0 34px;
  border-radius: 62px;
  background: ${color.incoming};
`;

const MessageInput = styled.input`
  flex: 1;
  min-width: 0;
  margin: 0 30px 0 35px;
  padding-top: 2px;
  outline: 0;
  color: #e9edef;
  font-size: 47px;
  line-height: 56px;
  &::placeholder { color: ${color.icon}; opacity: 1; }
`;

const MicButton = styled.button`
  display: flex;
  flex: none;
  align-items: center;
  justify-content: center;
  width: 126px;
  height: 126px;
  border-radius: 50%;
  background: ${color.green};
  color: ${color.page};
`;

const ClipButton = styled(IconButton)`
  margin-right: 82px;
`;

const line = { fill: "none", stroke: "currentColor", strokeLinecap: "round", strokeLinejoin: "round", "aria-hidden": true };

function Outgoing({ quote, children, time }) {
  return (
    <Bubble $mine>
      <Tail mine />
      <Quote>
        <QuoteAuthor>Dilio Figuritas</QuoteAuthor>
        <QuoteText>{quote}</QuoteText>
      </Quote>
      <Body $mine>
        <Text>{children}</Text>
        <Stamp $mine><time>{time}</time><Ticks /></Stamp>
      </Body>
    </Bubble>
  );
}

function Incoming({ bright, time, actions, children }) {
  return (
    <Bubble $bright={bright}>
      <Tail />
      <Body $bright={bright}>
        <Text $bright={bright}>{children}</Text>
        <Stamp $bright={bright}><time>{time}</time></Stamp>
      </Body>
      {actions}
    </Bubble>
  );
}

export default function App() {
  return (
    <Page>
      <GlobalStyle />
      <Wallpaper />
      <Header>
        <IconButton type="button" aria-label="Atrás">
          <svg width="43" height="42" viewBox="0 0 43 42" {...line} strokeWidth="5" strokeLinecap="butt" strokeLinejoin="miter">
            <path d="M23 2 4 21l19 19M4 21h39" />
          </svg>
        </IconButton>
        <Avatar>
          <svg width="88" height="88" viewBox="0 0 88 88" {...line} stroke="#f5f6f8" strokeWidth="5" role="img">
            <circle cx="39" cy="50" r="12" /><path d="M52 25v38" />
          </svg>
        </Avatar>
        <ContactName>Dilio Figuritas</ContactName>
        <IconButton type="button" aria-label="Más opciones">
          <svg width="30" height="44" viewBox="0 0 30 44" fill="currentColor" aria-hidden="true">
            <circle cx="15" cy="6" r="5.500" /><circle cx="15" cy="22" r="5.500" /><circle cx="15" cy="38" r="5.500" />
          </svg>
        </IconButton>
      </Header>
      <ScrollThumb />

      <Conversation>
        <Outgoing
          time="2:42 PM"
          quote={<><Emoji name="chart" label="gráfico" size="quote" /> <Strong>Tu estado, Miguel:</Strong>{"\n\n"}<Emoji name="person" label="persona" size="quote" /> Miguel - <Gem size="quote" /> Miembro Premium…</>}
        >
          <City /> Mis zonas
        </Outgoing>

        <Incoming
          time="2:42 PM"
          actions={
            <>
              <Action type="button"><ReplyIcon /><span><Emoji name="sunset" label="puesta de sol" size="action" /> Toda la ciudad</span></Action>
              <Action type="button" disabled><ReplyIcon /><span><Pin size="action" /> Elegir zonas</span></Action>
              <Action type="button"><ReplyIcon /><span><Emoji name="back" label="flecha izquierda" size="action" /> Volver</span></Action>
            </>
          }
        >
          <City /> <Strong>Mis zonas</Strong> (Premium) <Gem />{"\n"}¿Dónde quieres que te busque cambios?{"\n\n"}
          <City /> <Strong>Toda la ciudad</Strong> — todos los corregimientos de tu ciudad{"\n"}
          <Pin /> <Strong>Elegir zonas</Strong> — tú escoges cuáles
        </Incoming>

        <Outgoing
          time="2:43 PM"
          quote={<><City size="quote" /> <Strong>Mis zonas</Strong> (Premium) <Gem size="quote" />{"\n"}¿Dónde quieres que te busque cambios?{"\n"}…</>}
        >
          <Pin /> Elegir zonas
        </Outgoing>

        <Incoming bright time="2:43 PM" actions={<Action type="button">Elegir zonas</Action>}>
          <City /> <Strong>Mis zonas</Strong> (Premium <Gem />){"\n"}Toca <Strong>Elegir zonas</Strong> para marcar en qué corregimientos te buscamos cambios.
        </Incoming>
      </Conversation>

      <Composer onSubmit={(e) => e.preventDefault()}>
        <Pill>
          <IconButton type="button" aria-label="Emojis y stickers" $tone={color.icon}>
            <svg width="54" height="54" viewBox="0 0 54 54" {...line} strokeWidth="6">
              <path d="M51 29V18Q51 3 36 3H18Q3 3 3 18v18q0 15 15 15h10Q34 51 51 33Z" />
              <path d="M29 50V44q0-12 10-12h11" strokeWidth="5" />
              <path d="M16 31q2 11 14 9l1-7 8-2Z" fill="currentColor" strokeWidth="2" />
              <circle cx="18" cy="19" r="4" fill="currentColor" stroke="none" /><circle cx="36" cy="19" r="4" fill="currentColor" stroke="none" />
            </svg>
          </IconButton>
          <MessageInput type="text" placeholder="Message" aria-label="Message" />
          <ClipButton type="button" aria-label="Adjuntar" $tone={color.icon}>
            <svg width="36" height="54" viewBox="0 0 36 54" {...line} strokeWidth="5">
              <path d="M32 14v21q0 16-14.500 16T3 35V14Q3 3 13.500 3T24 14v21q0 6-5.500 6T13 35V14" />
            </svg>
          </ClipButton>
          <IconButton type="button" aria-label="Cámara" $tone={color.icon}>
            <svg width="54" height="50" viewBox="0 0 54 50" {...line} strokeWidth="5">
              <path d="M3 9h13l5-6h12l5 6h13v36H3Z" /><circle cx="27" cy="27" r="9" />
            </svg>
          </IconButton>
        </Pill>
        <MicButton type="button" aria-label="Mensaje de voz">
          <svg width="38" height="52" viewBox="0 0 38 52" {...line} strokeWidth="5">
            <rect x="11" y="0" width="16" height="33" rx="8" fill="currentColor" stroke="none" /><path d="M3 28q3 13 16 13t16-13M19 41v8" />
          </svg>
        </MicButton>
      </Composer>
    </Page>
  );
}
